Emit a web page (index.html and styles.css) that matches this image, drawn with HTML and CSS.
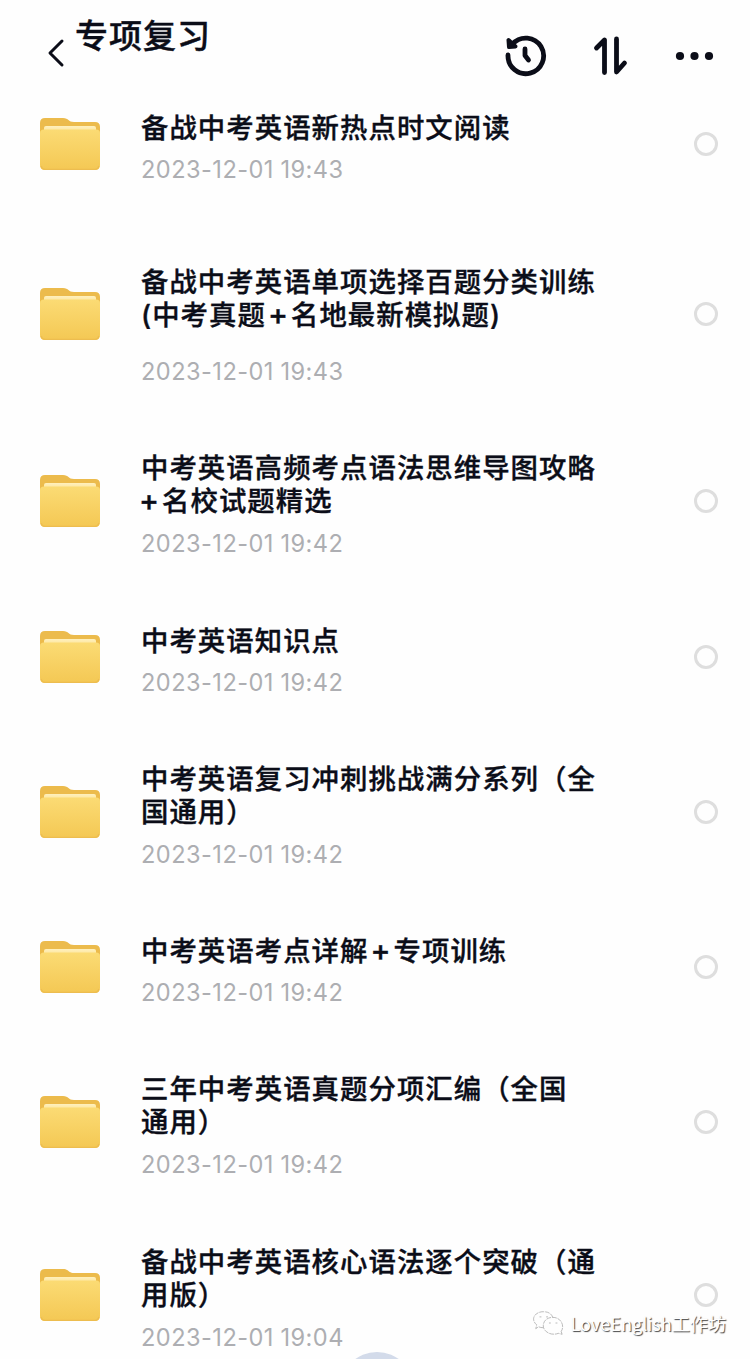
FILE: index.html
```html
<!DOCTYPE html>
<html lang="zh-CN">
  <head>
    <meta charset="utf-8">
    <title>专项复习</title>
    <link rel="stylesheet" href="styles.css">
  </head>
  <body>
    <svg class="defs" width="0" height="0">
      <defs>
        <linearGradient id="front" x1="0" y1="0" x2="0" y2="1">
          <stop offset="0" stop-color="#fbdb74" />
          <stop offset="1" stop-color="#f4c854" />
        </linearGradient>
        <linearGradient id="paper" x1="0" y1="0" x2="0" y2="1">
          <stop offset="0" stop-color="#fff0bd" />
          <stop offset="1" stop-color="#fbdc7c" />
        </linearGradient>
        <symbol id="folder" viewBox="0 0 60 54">
          <path d="M0 14V6Q0 1 5 1H23C29 1 28 5 34 5H55Q60 5 60 10V30H0Z" fill="#ecbb4c" />
          <rect x="4" y="9" width="52" height="10" rx="2" fill="url(#paper)" />
          <path d="M0 16Q0 12.500 4 12.500H56Q60 12.500 60 16V48Q60 53 55 53H5Q0 53 0 48Z" fill="url(#front)" />
          <path d="M1 49Q2 52.3 5 52.3H55Q58 52.3 59 49" fill="none" stroke="#edbd4f" stroke-width="1.2" />
        </symbol>
      </defs>
    </svg>

    <header class="header">
      <svg class="back" width="20" height="32" viewBox="0 0 20 32">
        <path d="M16 4L4 16L16 28" />
      </svg>
      <h1>专项复习</h1>
      <div class="actions">
        <svg width="44" height="44" viewBox="0 0 44 44">
          <path d="M5 21A17.800 17.800 0 1 0 9.500 10" class="line" />
          <path d="M5.500 6L6 13L12.500 12.500Z" class="arrow" />
          <path d="M22 15V21.500L25.500 26" class="line" />
        </svg>
        <svg width="36" height="42" viewBox="0 0 36 42">
          <path d="M3.500 13L11.500 5V37.500M23.500 4V37L31.500 28" class="line" />
        </svg>
        <svg width="40" height="12" viewBox="0 0 40 12">
          <circle cx="5" cy="6" r="4.100" />
          <circle cx="19.500" cy="6" r="4.100" />
          <circle cx="34" cy="6" r="4.100" />
        </svg>
      </div>
    </header>

    <main class="list">
      <div class="item">
        <svg class="folder"><use href="#folder" /></svg>
        <div class="info">
          <div class="name">备战中考英语新热点时文阅读</div>
          <div class="date">2023-12-01 19:43</div>
        </div>
        <span class="check"></span>
      </div>
      <div class="item spaced">
        <svg class="folder"><use href="#folder" /></svg>
        <div class="info">
          <div class="name">备战中考英语单项选择百题分类训练<br>(中考真题<span class="plus">+</span>名地最新模拟题)</div>
          <div class="date">2023-12-01 19:43</div>
        </div>
        <span class="check"></span>
      </div>
      <div class="item double">
        <svg class="folder"><use href="#folder" /></svg>
        <div class="info">
          <div class="name">中考英语高频考点语法思维导图攻略<br><span class="plus first">+</span>名校试题精选</div>
          <div class="date">2023-12-01 19:42</div>
        </div>
        <span class="check"></span>
      </div>
      <div class="item">
        <svg class="folder"><use href="#folder" /></svg>
        <div class="info">
          <div class="name">中考英语知识点</div>
          <div class="date">2023-12-01 19:42</div>
        </div>
        <span class="check"></span>
      </div>
      <div class="item double">
        <svg class="folder"><use href="#folder" /></svg>
        <div class="info">
          <div class="name">中考英语复习冲刺挑战满分系列（全<br>国通用）</div>
          <div class="date">2023-12-01 19:42</div>
        </div>
        <span class="check"></span>
      </div>
      <div class="item">
        <svg class="folder"><use href="#folder" /></svg>
        <div class="info">
          <div class="name">中考英语考点详解<span class="plus">+</span>专项训练</div>
          <div class="date">2023-12-01 19:42</div>
        </div>
        <span class="check"></span>
      </div>
      <div class="item double">
        <svg class="folder"><use href="#folder" /></svg>
        <div class="info">
          <div class="name">三年中考英语真题分项汇编（全国<br>通用）</div>
          <div class="date">2023-12-01 19:42</div>
        </div>
        <span class="check"></span>
      </div>
      <div class="item double">
        <svg class="folder"><use href="#folder" /></svg>
        <div class="info">
          <div class="name">备战中考英语核心语法逐个突破（通<br>用版）</div>
          <div class="date">2023-12-01 19:04</div>
        </div>
        <span class="check"></span>
      </div>
    </main>

    <div class="fab"></div>
    <div class="watermark">
      <svg width="32" height="28" viewBox="0 0 34 28">
        <path d="M12 19Q9 19 7 18L4 20L5 16C-2 10 3 2 12 2Q20 2 22 8" />
        <path d="M31 23L32 26L28 25C20 28 12 23 12 17C12 11 17 8 22 8C31 8 35 17 31 23Z" />
        <path d="M8 7.500h2M15 7.500h2M18 14h2M25 14h2" />
      </svg>
      <span>LoveEnglish工作坊</span>
    </div>
  </body>
</html>
```
FILE: styles.css
```css
* {
  box-sizing: border-box;
}
body {
  position: relative;
  width: 750px;
  height: 1359px;
  margin: 0;
  overflow: hidden;
  background: #fefefe;
  color: #0b0d18;
  font-family: Inter, "Noto Sans CJK SC", sans-serif;
}
.defs {
  position: absolute;
}
.header {
  display: flex;
  align-items: flex-start;
  height: 80px;
  padding: 12px 35px 0 46px;
}
.back {
  margin-top: 25px;
  fill: none;
  stroke: #0b0d18;
  stroke-width: 3;
  stroke-linecap: round;
  stroke-linejoin: round;
}
h1 {
  margin: 0 0 0 9px;
  font-size: 33px;
  font-weight: 500;
  line-height: 48px;
  letter-spacing: 1px;
  -webkit-text-stroke: 0.4px #0b0d18;
}
.actions {
  display: flex;
  align-items: center;
  height: 44px;
  margin: 22px 0 0 auto;
}
.actions svg {
  fill: #0b0d18;
}
.actions svg + svg {
  margin-left: 46px;
}
.actions .line {
  fill: none;
  stroke: #0b0d18;
  stroke-width: 4.8;
  stroke-linecap: round;
  stroke-linejoin: round;
}
.actions .arrow {
  stroke: #0b0d18;
  stroke-width: 4;
  stroke-linejoin: round;
}
.item {
  display: flex;
  align-items: center;
  height: 150px;
  padding: 0 32px 0 40px;
}
.item:first-child {
  height: 128px;
}
.item.double {
  height: 160px;
}
.item.spaced {
  height: 212px;
}
.item.double:nth-child(3) {
  height: 162px;
}
.item.double:last-child {
  height: 186px;
}
.folder {
  width: 60px;
  height: 54px;
}
.info {
  flex: 1;
  margin-left: 41px;
  padding-top: 5px;
}
.spaced .info {
  padding-top: 21px;
}
.name {
  font-size: 27.4px;
  font-weight: 500;
  line-height: 33px;
  letter-spacing: 1.04px;
  white-space: nowrap;
  -webkit-text-stroke: 0.35px #0b0d18;
}
.plus {
  margin: 0 2px;
  font-size: 30px;
  line-height: 0;
}
.plus.first {
  margin-left: -2px;
}
.date {
  margin-top: 13px;
  color: #adaeb2;
  font-size: 23.6px;
  line-height: 24px;
  letter-spacing: 0.45px;
  word-spacing: -0.5px;
}
.double .date {
  margin-top: 14px;
}
.spaced .date {
  margin-top: 28px;
}
.check {
  width: 24px;
  height: 24px;
  border: 3px solid #dedede;
  border-radius: 50%;
}
.fab {
  position: absolute;
  top: 1352px;
  left: 340px;
  width: 74px;
  height: 74px;
  border-radius: 50%;
  background: #d3dbea;
}
.watermark {
  position: absolute;
  right: 24px;
  bottom: 22px;
  display: flex;
  align-items: center;
  gap: 6px;
  color: #fff;
  font: 18.1px/28px "Noto Sans CJK SC", sans-serif;
  text-shadow: 1px 1px 1px #444;
  white-space: nowrap;
}
.watermark svg {
  fill: none;
  stroke: #999;
  stroke-width: 0.7;
  stroke-dasharray: 5 1;
}
```
